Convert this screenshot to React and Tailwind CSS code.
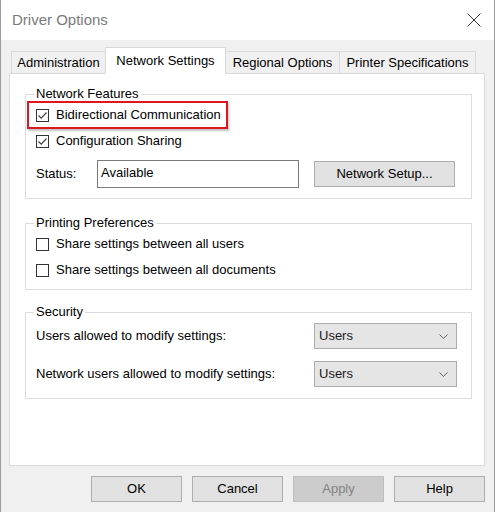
import React from 'react';

const Check = ({ checked }) => (
  <span className="flex h-[13px] w-[13px] shrink-0 items-center justify-center border border-[#333333] bg-white">
    {checked && (
      <svg width="11" height="11" viewBox="0 0 11 11">
        <path d="M1.5 5.5 L4.2 8.2 L9.5 2.5" fill="none" stroke="#444444" strokeWidth="1.2" />
      </svg>
    )}
  </span>
);

const CheckRow = ({ checked, label }) => (
  <div className="flex h-[26px] items-center gap-[7px]">
    <Check checked={checked} />
    <span>{label}</span>
  </div>
);

const Group = ({ title, className, children }) => (
  <fieldset className={`w-[447px] border border-[#dcdcdc] pl-[10px] ${className}`}>
    <legend className="-ml-[2px] px-[2px] leading-[16px]">{title}</legend>
    {children}
  </fieldset>
);

const Button = ({ children, className = '', disabled }) => (
  <div
    className={`flex h-[26px] items-center justify-center border ${
      disabled ? 'border-[#bfbfbf] bg-[#cccccc] text-[#838383]' : 'border-[#adadad] bg-[#e1e1e1]'
    } ${className}`}
  >
    {children}
  </div>
);

const Select = ({ value }) => (
  <div className="flex h-[26px] w-[143px] items-center justify-between border border-[#acacac] bg-[#e5e5e5] pl-[4px] pr-[8px] text-[#1a1a1a]">
    <span>{value}</span>
    <svg width="9" height="5" viewBox="0 0 9 5">
      <path d="M0.5 0.5 L4.5 4.5 L8.5 0.5" fill="none" stroke="#606060" strokeWidth="1" />
    </svg>
  </div>
);

const Tab = ({ label, active, className = '' }) =>
  active ? (
    <div className={`relative z-10 -ml-px flex h-[27px] items-center justify-center border border-b-0 border-[#d9d9d9] bg-white ${className}`}>
      {label}
    </div>
  ) : (
    <div className={`flex h-[23px] items-center justify-center border border-[#d9d9d9] bg-[#f0f0f0] ${className}`}>
      {label}
    </div>
  );

export default function App() {
  return (
    <div className="flex h-[512px] w-[495px] flex-col border-x border-[#9c9c9c] bg-[#f0f0f0] font-['Liberation_Sans',Arial,sans-serif] text-[13px] text-black">
      {/* Title bar */}
      <div className="flex h-[40px] items-center justify-between bg-white pl-[11px] pr-[13px]">
        <span className="text-[15px] text-[#7a7a7a]">Driver Options</span>
        <svg width="14" height="14" viewBox="0 0 14 14">
          <path d="M0.5 0.5 L13.5 13.5 M13.5 0.5 L0.5 13.5" stroke="#333333" strokeWidth="1" />
        </svg>
      </div>

      <div className="pl-[8px] pt-[7px]">
        {/* Tabs */}
        <div className="relative z-10 -mb-px ml-[2px] flex h-[27px] items-end">
          <Tab label="Administration" className="w-[95px]" />
          <Tab label="Network Settings" active className="w-[121px]" />
          <Tab label="Regional Options" className="-ml-px w-[115px]" />
          <Tab label="Printer Specifications" className="-ml-px w-[137px]" />
        </div>

        {/* Panel */}
        <div className="flex h-[393px] w-[476px] flex-col border border-[#d9d9d9] bg-white pl-[15px]">
          <Group title="Network Features" className="mt-[12px] pb-[10px]">
            <div className="relative">
              <CheckRow checked label="Bidirectional Communication" />
              <div className="pointer-events-none absolute -left-[9px] -top-[1px] h-[28px] w-[201px] border-2 border-[#e0161e] shadow-[1px_2px_2px_rgba(0,0,0,0.25)]" />
            </div>
            <CheckRow checked label="Configuration Sharing" />
            <div className="mt-[6px] flex items-center">
              <span className="w-[61px]">Status:</span>
              <div className="h-[28px] w-[202px] border border-[#7a7a7a] bg-white pl-[3px] pt-[4px] leading-[16px]">
                Available
              </div>
              <Button className="ml-[15px] w-[141px]">Network Setup...</Button>
            </div>
          </Group>

          <Group title="Printing Preferences" className="mt-[16px] pb-[6px]">
            <CheckRow label="Share settings between all users" />
            <CheckRow label="Share settings between all documents" />
          </Group>

          <Group title="Security" className="mt-[14px] pb-[11px]">
            <div className="mt-[3px] flex items-center">
              <span className="w-[278px]">Users allowed to modify settings:</span>
              <Select value="Users" />
            </div>
            <div className="mt-[12px] flex items-center">
              <span className="w-[278px]">Network users allowed to modify settings:</span>
              <Select value="Users" />
            </div>
          </Group>
        </div>
      </div>

      {/* Buttons */}
      <div className="mt-[10px] flex gap-[10px] pl-[90px]">
        <Button className="w-[91px]">OK</Button>
        <Button className="w-[91px]">Cancel</Button>
        <Button className="w-[91px]" disabled>Apply</Button>
        <Button className="w-[91px]">Help</Button>
      </div>
    </div>
  );
}
